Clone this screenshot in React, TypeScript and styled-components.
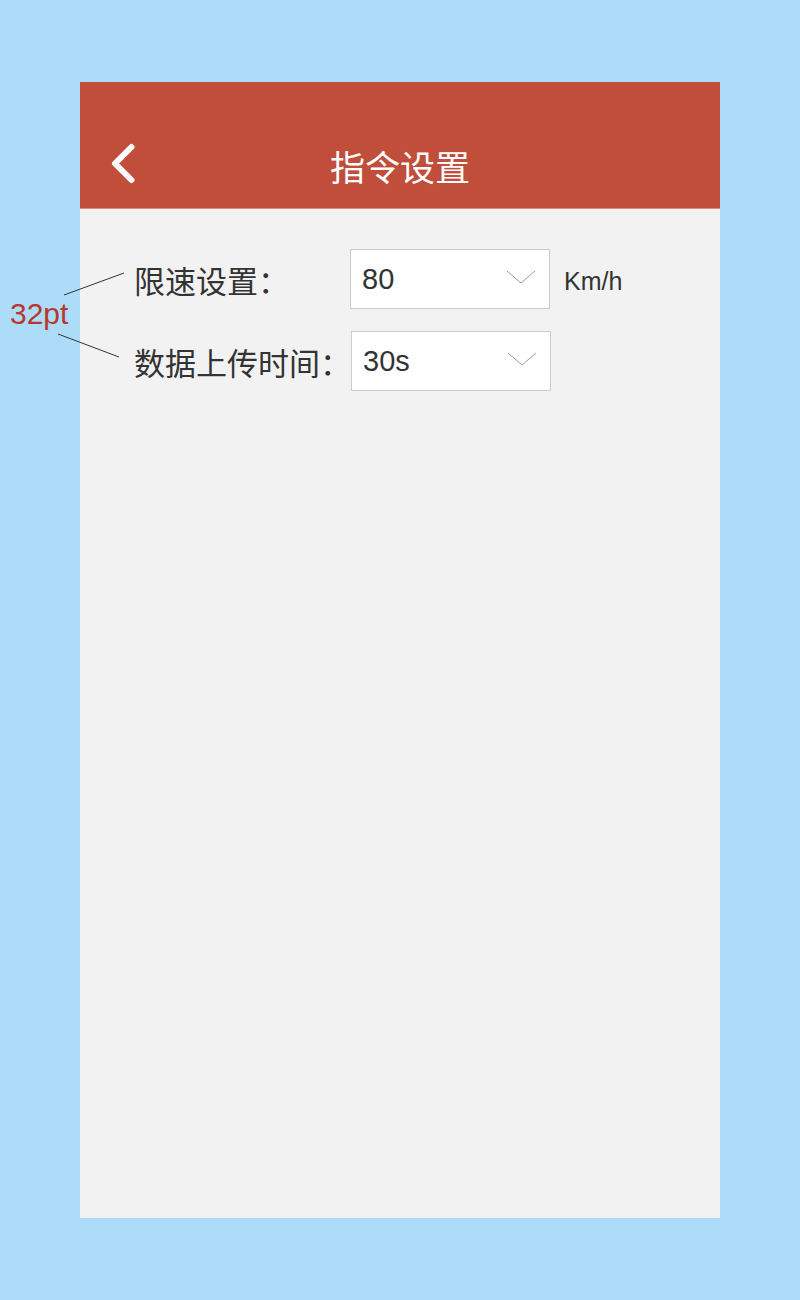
import React from "react";
import styled, { createGlobalStyle } from "styled-components";

const GlobalStyle = createGlobalStyle`
  html, body {
    margin: 0;
    padding: 0;
    background: #addcf9;
  }
  body {
    font-family: "Liberation Sans", "Noto Sans CJK SC", sans-serif;
  }
`;

const Page = styled.div`
  position: relative;
  width: 800px;
  height: 1300px;
  padding: 82px 80px 0;
  box-sizing: border-box;
`;

const Phone = styled.div`
  width: 640px;
  height: 1136px;
  background: #f2f2f2;
  display: flex;
  flex-direction: column;
`;

const Header = styled.header`
  height: 127px;
  padding-top: 40px;
  box-sizing: border-box;
  background: #c14d3b;
  border-bottom: 1px solid #e08a7c;
  display: flex;
  align-items: center;
  justify-content: center;
  position: relative;
`;

const BackButton = styled.button`
  position: absolute;
  left: 26px;
  top: 60px;
  width: 40px;
  height: 44px;
  padding: 0;
  border: none;
  background: transparent;
  display: flex;
  align-items: center;
  justify-content: center;
`;

const Title = styled.h1`
  margin: 0;
  color: #ffffff;
  font-family: "Noto Sans CJK SC", sans-serif;
  font-size: 35px;
  font-weight: 400;
  line-height: 1;
`;

const Content = styled.main`
  padding: 40px 0 0 54px;
  display: flex;
  flex-direction: column;
  gap: 22px;
`;

const Row = styled.div`
  display: flex;
  align-items: center;
  height: 60px;
`;

const Label = styled.span`
  min-width: 216px;
  font-family: "Noto Sans CJK SC", sans-serif;
  font-size: 31px;
  color: #333333;
  white-space: nowrap;
  line-height: 1;
`;

const Select = styled.div`
  width: 200px;
  height: 60px;
  box-sizing: border-box;
  background: #ffffff;
  border: 1px solid #cccccc;
  display: flex;
  align-items: center;
  justify-content: space-between;
  padding: 0 13px 0 11px;
`;

const Value = styled.span`
  font-family: "Liberation Sans", sans-serif;
  font-size: 29px;
  color: #333333;
`;

const Unit = styled.span`
  margin-left: 14px;
  padding-top: 4px;
  font-family: "Liberation Sans", sans-serif;
  font-size: 25px;
  color: #333333;
`;

const Annotation = styled.div`
  position: absolute;
  left: 10px;
  top: 299px;
  font-family: "Liberation Sans", sans-serif;
  font-size: 30px;
  color: #b5392c;
  line-height: 1;
`;

const Leaders = styled.svg`
  position: absolute;
  left: 0;
  top: 0;
  pointer-events: none;
`;

const Chevron = () => (
  <svg width="30" height="18" viewBox="0 0 30 18">
    <polyline points="1,1 15,13 29,1" fill="none" stroke="#9a9a9a" strokeWidth="1" />
  </svg>
);

const BackIcon = () => (
  <svg width="30" height="44" viewBox="0 0 30 44">
    <polyline
      points="20.5,5 4,21.5 20.5,38"
      fill="none"
      stroke="#ffffff"
      strokeWidth="6"
      strokeLinecap="round"
      strokeLinejoin="round"
    />
  </svg>
);

const settings = [
  { label: "限速设置：", value: "80", unit: "Km/h" },
  { label: "数据上传时间：", value: "30s" },
];

export default function App() {
  return (
    <>
      <GlobalStyle />
      <Page>
        <Phone>
          <Header>
            <BackButton aria-label="返回">
              <BackIcon />
            </BackButton>
            <Title>指令设置</Title>
          </Header>
          <Content>
            {settings.map((s) => (
              <Row key={s.label}>
                <Label>{s.label}</Label>
                <Select>
                  <Value>{s.value}</Value>
                  <Chevron />
                </Select>
                {s.unit && <Unit>{s.unit}</Unit>}
              </Row>
            ))}
          </Content>
        </Phone>
        <Annotation>32pt</Annotation>
        <Leaders width="800" height="1300">
          <line x1="64" y1="295" x2="124" y2="273" stroke="#333" strokeWidth="1" />
          <line x1="58" y1="334" x2="119" y2="357" stroke="#333" strokeWidth="1" />
        </Leaders>
      </Page>
    </>
  );
}
